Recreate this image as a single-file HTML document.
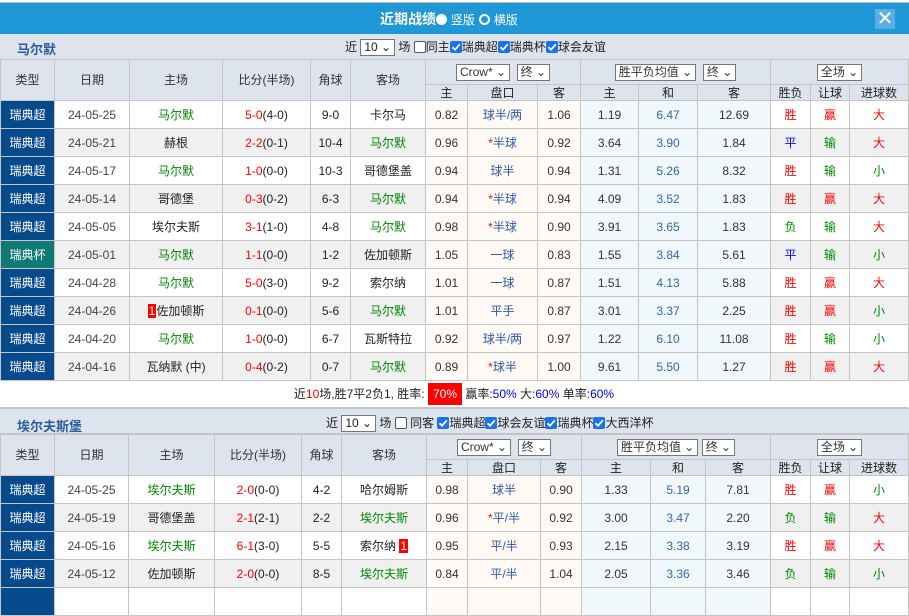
<!DOCTYPE html>
<html><head><meta charset="utf-8"><style>
*{margin:0;padding:0;box-sizing:border-box}
body{width:909px;height:594px;overflow:hidden;background:#fff;font-family:"Liberation Sans","Noto Sans CJK SC",sans-serif;font-size:12px;color:#222;position:relative}
.top{position:absolute;left:0;top:2px;width:909px;height:32px;background:#1e98d6;border-top:1px solid #bbb}
.top .t{position:absolute;left:380px;top:6px;color:#fff;font-weight:bold;font-size:14px}
.top .t span{font-weight:normal;font-size:12px}
.rd{display:inline-block;width:11px;height:11px;border-radius:50%;background:#fff;vertical-align:-1px}
.ro{display:inline-block;width:11px;height:11px;border-radius:50%;border:2px solid #fff;vertical-align:-1px}
.x{position:absolute;left:875px;top:6px;width:20px;height:20px;background:#5aaee6;color:#fff;font-size:20px;line-height:20px;text-align:center}
.bar{position:absolute;left:0;width:909px;height:26px;background:#dde4ed;border-bottom:1px solid #c4c4c4}
.bar .n{position:absolute;left:17px;top:5px;color:#2a5da0;font-weight:bold;font-size:13px}
.bar .f{position:absolute;top:5px;font-size:12px;color:#222;white-space:nowrap;line-height:17px;height:17px}
.sel{display:inline-block;border:1px solid #777;background:#fff;padding:0 3px;height:17px;line-height:15px;font-size:12px;vertical-align:top}
.cb{display:inline-block;width:12px;height:12px;border:1px solid #555;border-radius:2px;background:#fff;vertical-align:-2px}
.ck{display:inline-block;width:12px;height:12px;vertical-align:-2px}
table{position:absolute;left:0;border-collapse:collapse;table-layout:fixed;width:908px}
td{border:1px solid #c4c4c4;text-align:center;height:28px;white-space:nowrap;overflow:hidden;font-size:12px;padding:0;line-height:14px}
.h td{background:#dde4ed;color:#333;height:25px}
.h2 td{background:#dde4ed;height:16px;font-size:12px;line-height:14px}
.ty{background:#074a8c!important;color:#fff}
.cup{background:#0f7a73!important;color:#fff}
.g td{background:#f0f0f0}
.o1{background:#fffaf6!important;color:#333}
.o2{background:#f1f8fc!important;color:#333}
.pk{color:#2d5aa6}
.bl{color:#3366aa}
.gr{color:#080}
.r{color:#f00}
.b{color:#00f}
.dk{color:#444}
.bx{background:#f00;color:#fff;padding:0 1px}
.sum{position:absolute;left:0;top:380px;width:908px;height:28px;text-align:center;line-height:28px;border-bottom:1px solid #c4c4c4}
</style></head><body>
<svg width="0" height="0" style="position:absolute"><symbol id="c" viewBox="0 0 12 12"><rect width="12" height="12" rx="2" fill="#1a73e8"/><path d="M2.5 6.2 L5 8.7 L9.8 3.3" stroke="#fff" stroke-width="1.8" fill="none"/></symbol></svg>
<div class="top"><div class="t">近期战绩<span class="rd"></span> <span>竖版</span> <span class="ro"></span> <span>横版</span></div><div class="x">✕</div></div>

<div class="bar" style="top:34px"><div class="n">马尔默</div>
<div class="f" style="left:345px">近 <span class="sel">10 ⌄</span> 场 <span class="cb"></span>同主<svg class="ck"><use href="#c"/></svg>瑞典超<svg class="ck"><use href="#c"/></svg>瑞典杯<svg class="ck"><use href="#c"/></svg>球会友谊</div></div>

<table style="top:59px">
<colgroup><col style="width:54px"><col style="width:75px"><col style="width:93px"><col style="width:88px"><col style="width:40px"><col style="width:75px"><col style="width:42px"><col style="width:70px"><col style="width:43px"><col style="width:58px"><col style="width:59px"><col style="width:73px"><col style="width:40px"><col style="width:39px"><col style="width:59px"></colgroup>
<tr class="h"><td rowspan="2">类型</td><td rowspan="2">日期</td><td rowspan="2">主场</td><td rowspan="2">比分(半场)</td><td rowspan="2">角球</td><td rowspan="2">客场</td><td colspan="3"><span class="sel">Crow* ⌄</span> &nbsp;<span class="sel">终 ⌄</span></td><td colspan="3"><span class="sel">胜平负均值 ⌄</span> &nbsp;<span class="sel">终 ⌄</span></td><td colspan="3"><span class="sel">全场 ⌄</span></td></tr>
<tr class="h2"><td>主</td><td>盘口</td><td>客</td><td>主</td><td>和</td><td>客</td><td>胜负</td><td>让球</td><td>进球数</td></tr>
<tr><td class="ty">瑞典超</td><td class="dk">24-05-25</td><td class="gr">马尔默</td><td><span class="r">5-0</span>(4-0)</td><td>9-0</td><td>卡尔马</td><td class="o1">0.82</td><td class="o1 pk">球半/两</td><td class="o1">1.06</td><td class="o2">1.19</td><td class="o2 bl">6.47</td><td class="o2">12.69</td><td class="r">胜</td><td class="r">赢</td><td class="r">大</td></tr>
<tr class="g"><td class="ty">瑞典超</td><td class="dk">24-05-21</td><td>赫根</td><td><span class="r">2-2</span>(0-1)</td><td>10-4</td><td class="gr">马尔默</td><td class="o1">0.96</td><td class="o1 pk"><span class="r">*</span>半球</td><td class="o1">0.92</td><td class="o2">3.64</td><td class="o2 bl">3.90</td><td class="o2">1.84</td><td class="b">平</td><td class="gr">输</td><td class="r">大</td></tr>
<tr><td class="ty">瑞典超</td><td class="dk">24-05-17</td><td class="gr">马尔默</td><td><span class="r">1-0</span>(0-0)</td><td>10-3</td><td>哥德堡盖</td><td class="o1">0.94</td><td class="o1 pk">球半</td><td class="o1">0.94</td><td class="o2">1.31</td><td class="o2 bl">5.26</td><td class="o2">8.32</td><td class="r">胜</td><td class="gr">输</td><td class="gr">小</td></tr>
<tr class="g"><td class="ty">瑞典超</td><td class="dk">24-05-14</td><td>哥德堡</td><td><span class="r">0-3</span>(0-2)</td><td>6-3</td><td class="gr">马尔默</td><td class="o1">0.94</td><td class="o1 pk"><span class="r">*</span>半球</td><td class="o1">0.94</td><td class="o2">4.09</td><td class="o2 bl">3.52</td><td class="o2">1.83</td><td class="r">胜</td><td class="r">赢</td><td class="r">大</td></tr>
<tr><td class="ty">瑞典超</td><td class="dk">24-05-05</td><td>埃尔夫斯</td><td><span class="r">3-1</span>(1-0)</td><td>4-8</td><td class="gr">马尔默</td><td class="o1">0.98</td><td class="o1 pk"><span class="r">*</span>半球</td><td class="o1">0.90</td><td class="o2">3.91</td><td class="o2 bl">3.65</td><td class="o2">1.83</td><td class="gr">负</td><td class="gr">输</td><td class="r">大</td></tr>
<tr class="g"><td class="cup">瑞典杯</td><td class="dk">24-05-01</td><td class="gr">马尔默</td><td><span class="r">1-1</span>(0-0)</td><td>1-2</td><td>佐加顿斯</td><td class="o1">1.05</td><td class="o1 pk">一球</td><td class="o1">0.83</td><td class="o2">1.55</td><td class="o2 bl">3.84</td><td class="o2">5.61</td><td class="b">平</td><td class="gr">输</td><td class="gr">小</td></tr>
<tr><td class="ty">瑞典超</td><td class="dk">24-04-28</td><td class="gr">马尔默</td><td><span class="r">5-0</span>(3-0)</td><td>9-2</td><td>索尔纳</td><td class="o1">1.01</td><td class="o1 pk">一球</td><td class="o1">0.87</td><td class="o2">1.51</td><td class="o2 bl">4.13</td><td class="o2">5.88</td><td class="r">胜</td><td class="r">赢</td><td class="r">大</td></tr>
<tr class="g"><td class="ty">瑞典超</td><td class="dk">24-04-26</td><td><span class="bx">1</span>佐加顿斯</td><td><span class="r">0-1</span>(0-0)</td><td>5-6</td><td class="gr">马尔默</td><td class="o1">1.01</td><td class="o1 pk">平手</td><td class="o1">0.87</td><td class="o2">3.01</td><td class="o2 bl">3.37</td><td class="o2">2.25</td><td class="r">胜</td><td class="r">赢</td><td class="gr">小</td></tr>
<tr><td class="ty">瑞典超</td><td class="dk">24-04-20</td><td class="gr">马尔默</td><td><span class="r">1-0</span>(0-0)</td><td>6-7</td><td>瓦斯特拉</td><td class="o1">0.92</td><td class="o1 pk">球半/两</td><td class="o1">0.97</td><td class="o2">1.22</td><td class="o2 bl">6.10</td><td class="o2">11.08</td><td class="r">胜</td><td class="gr">输</td><td class="gr">小</td></tr>
<tr class="g"><td class="ty">瑞典超</td><td class="dk">24-04-16</td><td>瓦纳默 (中)</td><td><span class="r">0-4</span>(0-2)</td><td>0-7</td><td class="gr">马尔默</td><td class="o1">0.89</td><td class="o1 pk"><span class="r">*</span>球半</td><td class="o1">1.00</td><td class="o2">9.61</td><td class="o2 bl">5.50</td><td class="o2">1.27</td><td class="r">胜</td><td class="r">赢</td><td class="r">大</td></tr>
</table>

<div class="sum">近<span class="r">10</span>场,胜7平2负1, 胜率: <span style="background:#f00;color:#fff;padding:4px 5px">70%</span> 赢率:<span class="b">50%</span> 大:<span class="b">60%</span> 单率:<span class="b">60%</span></div>

<div class="bar" style="top:408px;border-top:1px solid #c4c4c4"><div class="n" style="top:7px">埃尔夫斯堡</div>
<div class="f" style="left:326px;top:6px">近 <span class="sel">10 ⌄</span> 场 <span class="cb"></span> 同客 <svg class="ck"><use href="#c"/></svg>瑞典超<svg class="ck"><use href="#c"/></svg>球会友谊<svg class="ck"><use href="#c"/></svg>瑞典杯<svg class="ck"><use href="#c"/></svg>大西洋杯</div></div>

<table style="top:434px">
<colgroup><col style="width:54px"><col style="width:74px"><col style="width:86px"><col style="width:87px"><col style="width:40px"><col style="width:85px"><col style="width:41px"><col style="width:73px"><col style="width:41px"><col style="width:69px"><col style="width:55px"><col style="width:65px"><col style="width:40px"><col style="width:39px"><col style="width:59px"></colgroup>
<tr class="h"><td rowspan="2">类型</td><td rowspan="2">日期</td><td rowspan="2">主场</td><td rowspan="2">比分(半场)</td><td rowspan="2">角球</td><td rowspan="2">客场</td><td colspan="3"><span class="sel">Crow* ⌄</span> &nbsp;<span class="sel">终 ⌄</span></td><td colspan="3"><span class="sel">胜平负均值 ⌄</span> <span class="sel">终 ⌄</span></td><td colspan="3"><span class="sel">全场 ⌄</span></td></tr>
<tr class="h2"><td>主</td><td>盘口</td><td>客</td><td>主</td><td>和</td><td>客</td><td>胜负</td><td>让球</td><td>进球数</td></tr>
<tr><td class="ty">瑞典超</td><td class="dk">24-05-25</td><td class="gr">埃尔夫斯</td><td><span class="r">2-0</span>(0-0)</td><td>4-2</td><td>哈尔姆斯</td><td class="o1">0.98</td><td class="o1 pk">球半</td><td class="o1">0.90</td><td class="o2">1.33</td><td class="o2 bl">5.19</td><td class="o2">7.81</td><td class="r">胜</td><td class="r">赢</td><td class="gr">小</td></tr>
<tr class="g"><td class="ty">瑞典超</td><td class="dk">24-05-19</td><td>哥德堡盖</td><td><span class="r">2-1</span>(2-1)</td><td>2-2</td><td class="gr">埃尔夫斯</td><td class="o1">0.96</td><td class="o1 pk"><span class="r">*</span>平/半</td><td class="o1">0.92</td><td class="o2">3.00</td><td class="o2 bl">3.47</td><td class="o2">2.20</td><td class="gr">负</td><td class="gr">输</td><td class="r">大</td></tr>
<tr><td class="ty">瑞典超</td><td class="dk">24-05-16</td><td class="gr">埃尔夫斯</td><td><span class="r">6-1</span>(3-0)</td><td>5-5</td><td>索尔纳 <span class="bx">1</span></td><td class="o1">0.95</td><td class="o1 pk">平/半</td><td class="o1">0.93</td><td class="o2">2.15</td><td class="o2 bl">3.38</td><td class="o2">3.19</td><td class="r">胜</td><td class="r">赢</td><td class="r">大</td></tr>
<tr class="g"><td class="ty">瑞典超</td><td class="dk">24-05-12</td><td>佐加顿斯</td><td><span class="r">2-0</span>(0-0)</td><td>8-5</td><td class="gr">埃尔夫斯</td><td class="o1">0.84</td><td class="o1 pk">平/半</td><td class="o1">1.04</td><td class="o2">2.05</td><td class="o2 bl">3.36</td><td class="o2">3.46</td><td class="gr">负</td><td class="gr">输</td><td class="gr">小</td></tr>
<tr><td class="ty"></td><td></td><td></td><td></td><td></td><td></td><td class="o1"></td><td class="o1"></td><td class="o1"></td><td class="o2"></td><td class="o2"></td><td class="o2"></td><td></td><td></td><td></td></tr>
</table>
</body></html>
